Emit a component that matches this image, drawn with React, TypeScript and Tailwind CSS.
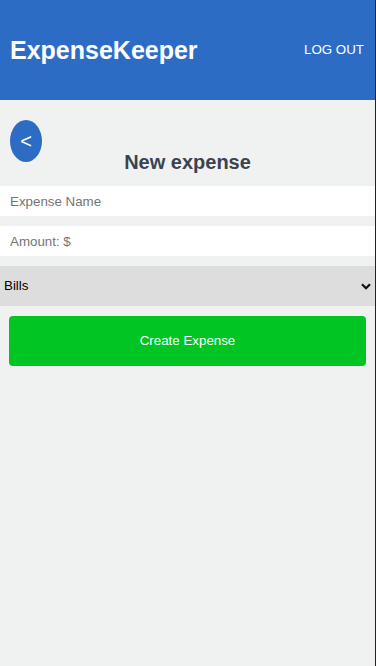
import React from "react";

const App: React.FC = () => {
  return (
    <div className="min-h-[666px] w-full flex font-['Liberation_Sans',Arial,sans-serif]">
      <div className="flex-1 min-h-[666px] bg-[#f0f2f1]">
        {/* Header */}
        <header className="h-[100px] bg-[#2d6cc4] flex items-center justify-between pl-[10px] pr-[11px]">
          <h1 className="text-[25px] font-bold text-white leading-none">ExpenseKeeper</h1>
          <button className="text-[13.333px] text-white leading-none">LOG OUT</button>
        </header>

        {/* Form */}
        <div className="pt-5">
          <div className="pl-[10px]">
            <button className="w-[32px] h-[42px] rounded-[50%] bg-[#2d6cc4] text-white text-[20px] leading-none flex items-center justify-center">
              &lt;
            </button>
          </div>
          <h2 className="-mt-[11px] mb-3 text-center text-[20px] leading-[23px] font-bold text-[#3a4350]">
            New expense
          </h2>

          <div className="flex flex-col gap-[10px]">
            <input
              type="text"
              placeholder="Expense Name"
              className="h-[30px] w-full bg-white px-[10px] text-[13.333px] text-black placeholder:text-[#747474] outline-none"
            />
            <input
              type="text"
              placeholder="Amount: $"
              className="h-[30px] w-full bg-white px-[10px] text-[13.333px] text-black placeholder:text-[#747474] outline-none"
            />
            <div className="relative h-[40px] bg-[#dddddd]">
              <select className="h-full w-full appearance-none bg-transparent pl-[4px] text-[13.333px] text-black outline-none">
                <option>Bills</option>
                <option>Food</option>
                <option>Entertainment</option>
                <option>Other</option>
              </select>
              <svg
                className="pointer-events-none absolute right-[4px] top-[17px] w-[10px] h-[7px]"
                viewBox="0 0 10 7"
                fill="none"
              >
                <path d="M1 1.2 L5 5.2 L9 1.2" stroke="#111" strokeWidth="2.2" />
              </svg>
            </div>
          </div>

          <div className="px-[9px] pt-[10px]">
            <button className="w-full h-[50px] rounded-[4px] bg-[#00c522] text-white text-[13.333px]">
              Create Expense
            </button>
          </div>
        </div>
      </div>
      <div className="w-px bg-[#222222]" />
    </div>
  );
};

export default App;
